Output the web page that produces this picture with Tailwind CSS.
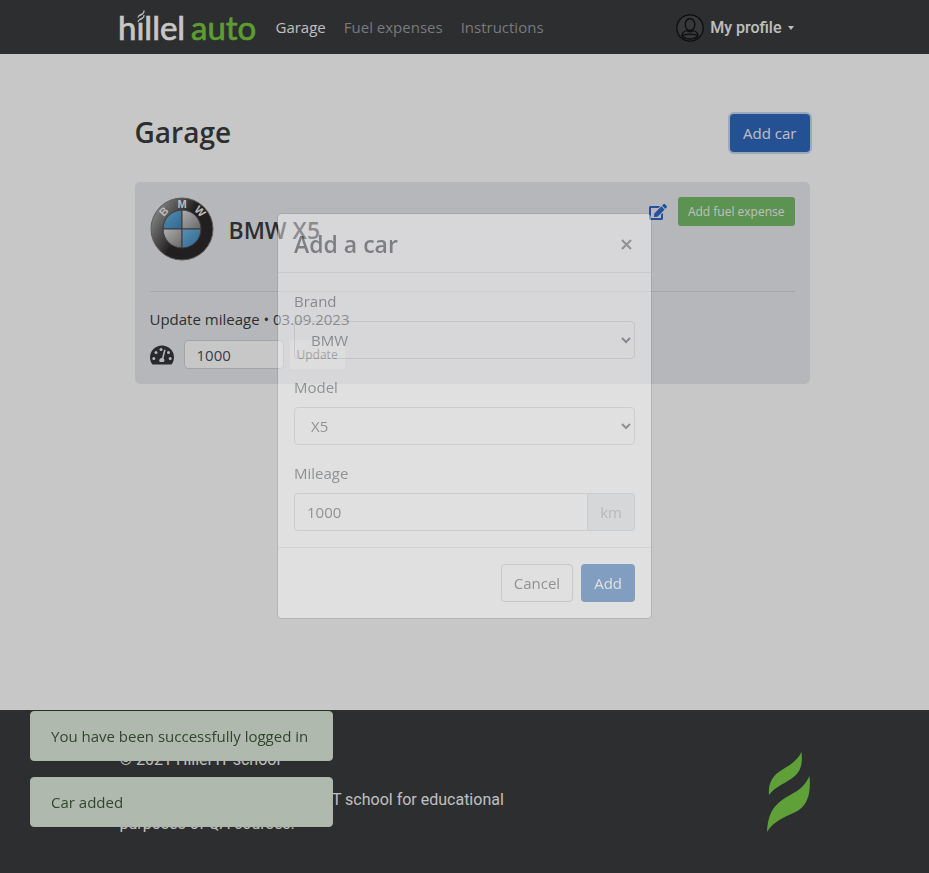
<!DOCTYPE html>
<html lang="en">
<head>
<meta charset="utf-8">
<meta name="viewport" content="width=device-width, initial-scale=1">
<title>Hillel auto - Garage</title>
<script src="https://cdn.jsdelivr.net/npm/@tailwindcss/browser@4"></script>
</head>
<body class="flex min-h-screen flex-col bg-white font-['Open_Sans',sans-serif] text-[15px] leading-6 text-[#3a3c3e]">

<header class="bg-[#393b3e]">
  <div class="mx-auto flex h-[54px] max-w-[720px] items-center px-[15px]">
    <a href="#" aria-label="hillel auto" class="mr-[20px] block">
      <svg width="136" height="48" viewBox="0 0 136 48" class="block overflow-visible font-['Lato',sans-serif] text-[33px]" stroke-width="0.700" aria-hidden="true">
        <text x="-2" y="37" fill="#ffffff" stroke="#ffffff">hıllel</text>
        <text x="71" y="37" fill="#76c93f" stroke="#76c93f">auto</text>
        <path d="M18 14.500 C18 10.500 24 12 24 7.500 C24.500 13 19 11.500 18 14.500Z M18 19 C18 15 24 16 24 12 C24.500 17 19 16 18 19Z" fill="#ffffff" stroke="#ffffff"/>
      </svg>
    </a>
    <nav class="flex gap-[18px] text-[#9b9d9f]">
      <a href="#" class="text-[#f4f4f4]">Garage</a>
      <a href="#">Fuel expenses</a>
      <a href="#">Instructions</a>
    </nav>
    <button type="button" class="mr-[16px] ml-auto flex items-center gap-[6px] pt-[2px] font-['Roboto',sans-serif] text-[16px] text-[#f4f4f4]">
      <svg width="28" height="28" viewBox="0 0 28 28" fill="none" stroke="#111214" stroke-width="1.300" aria-hidden="true">
        <circle cx="14" cy="14" r="13.200" fill="#46484a"/>
        <ellipse cx="14" cy="10.500" rx="4.800" ry="6"/>
        <path d="M10.500 16.500 C7.500 17.500 6 19.500 6 22 C8 24 11 25 14 25 C17 25 20 24 22 22 C22 19.500 20.500 17.500 17.500 16.500 C15.500 18 12.500 18 10.500 16.500Z M6 22 C9 19.500 19 19.500 22 22"/>
      </svg>
      <span class="font-medium">My profile</span>
      <svg width="6" height="4" viewBox="0 0 6 4" fill="#f4f4f4" aria-hidden="true"><path d="M0 0H6L3 4Z"/></svg>
    </button>
  </div>
</header>

<main class="mx-auto w-full max-w-[720px] flex-1 pt-[60px] pr-[15px] pl-[30px]">
  <div class="mb-[30px] flex items-start justify-between">
    <h1 class="text-[28px] leading-9 font-semibold">Garage</h1>
    <button type="button" class="h-[38px] rounded-[4px] bg-[#2d68be] px-[13px] text-[#f4f4f4] ring-2 ring-[#c5d8f0]">Add car</button>
  </div>

  <section class="rounded-[5px] bg-[#e9ebf0] px-[15px] pt-[15px] pb-[15px]">
    <div class="flex items-start border-b border-[#d5d7dc] pb-[30px]">
      <svg width="64" height="64" viewBox="1 1 64 64" class="mr-[15px]" role="img" aria-label="BMW">
        <defs>
          <linearGradient id="ring" x1="0" y1="0.200" x2="0.500" y2="0.500"><stop offset="0" stop-color="#b4b4b6"/><stop offset="1" stop-color="#2c2829"/></linearGradient>
          <linearGradient id="blue" x1="0" y1="0" x2="1" y2="1"><stop offset="0" stop-color="#72b8e2"/><stop offset="1" stop-color="#3d84bb"/></linearGradient>
          <linearGradient id="grey" x1="0" y1="0" x2="1" y2="1"><stop offset="0" stop-color="#e0e0e0"/><stop offset="1" stop-color="#858585"/></linearGradient>
        </defs>
        <circle cx="33" cy="33" r="31" fill="url(#ring)" stroke="#777" stroke-width="1"/>
        <g stroke="#4b4b4b" stroke-width="1">
          <path d="M33 33V14A19 19 0 0 0 14 33Z" fill="url(#blue)"/>
          <path d="M33 33V14A19 19 0 0 1 52 33Z" fill="url(#grey)"/>
          <path d="M33 33V52A19 19 0 0 1 14 33Z" fill="url(#grey)"/>
          <path d="M33 33V52A19 19 0 0 0 52 33Z" fill="url(#blue)"/>
        </g>
        <g fill="#f0f0f0" font-size="11" font-weight="bold" text-anchor="middle" class="font-['Liberation_Sans',sans-serif]">
          <text transform="rotate(-46 33 33)" x="33" y="11.500">B</text>
          <text x="33" y="11.500">M</text>
          <text transform="rotate(46 33 33)" x="33" y="11.500">W</text>
        </g>
      </svg>
      <h2 class="mt-[19px] text-[23px] leading-7 font-semibold">BMW X5</h2>
      <div class="ml-auto flex items-center gap-[11px]">
        <button type="button" aria-label="Edit car" class="block">
          <svg width="18" height="16" viewBox="0 0 576 512" fill="#2d68c8" aria-hidden="true"><path d="M402.600 83.200l90.200 90.200c3.800 3.800 3.800 10 0 13.800L274.400 405.600l-92.800 10.300c-12.400 1.400-22.900-9.100-21.500-21.500l10.300-92.800L388.800 83.200c3.800-3.800 10-3.800 13.800 0zm162-22.900l-48.800-48.800c-15.200-15.200-39.900-15.200-55.200 0l-35.400 35.400c-3.800 3.800-3.800 10 0 13.800l90.200 90.200c3.800 3.800 10 3.800 13.800 0l35.400-35.400c15.200-15.300 15.200-40 0-55.200zM384 346.200V448H64V128h229.800c3.200 0 6.200-1.300 8.500-3.500l40-40c7.600-7.600 2.200-20.500-8.500-20.500H48C21.500 64 0 85.500 0 112v352c0 26.500 21.500 48 48 48h352c26.500 0 48-21.500 48-48V306.200c0-10.700-12.900-16-20.500-8.500l-40 40c-2.200 2.300-3.500 5.300-3.500 8.500z"/></svg>
        </button>
        <button type="button" class="h-[29px] rounded-[3px] bg-[#77bc69] px-[10px] text-[12px] text-[#f4f4f4]">Add fuel expense</button>
      </div>
    </div>
    <form class="pt-[15px]">
      <label for="mileage-update" class="mb-[9px] block">Update mileage • 03.09.2023</label>
      <div class="flex items-center">
        <svg width="24" height="20" viewBox="0 0 24 20" class="mr-[10px]" aria-hidden="true">
          <path d="M2.500 19.500C1 17.500 0 15 0 12.500A12 12 0 0 1 24 12.500C24 15 23 17.500 21.500 19.500Z" fill="#343638"/>
          <g fill="#e9ebf0"><circle cx="3.800" cy="13.500" r="1.500"/><circle cx="6" cy="7.500" r="1.500"/><circle cx="11" cy="4.500" r="1.500"/><circle cx="18.500" cy="7.500" r="1.500"/><circle cx="20.200" cy="13.500" r="1.500"/><path d="M14.200 4.500L15.600 5L13.600 13.200A2.800 2.800 0 0 1 13.800 17H9.700A2.800 2.800 0 0 1 12 12.700Z"/></g>
        </svg>
        <input id="mileage-update" value="1000" class="mr-[6px] h-[29px] w-[100px] rounded-[4px] border border-[#ced4da] bg-white px-[12px] text-[#495057]">
        <button type="button" disabled class="h-[29px] rounded-[3px] bg-[#f7f7f7] px-[7px] text-[12px] text-[#757575]">Update</button>
      </div>
    </form>
  </section>
</main>

<footer class="bg-[#393b3e] font-['Roboto',sans-serif] text-[16px] text-[#f4f4f4]">
  <div class="mx-auto flex max-w-[720px] items-center justify-between px-[15px] pt-[38px] pb-[37px]">
    <div class="max-w-[400px]">
      <p class="mb-[16px]">© 2021 Hillel IT school</p>
      <p>Hillel auto developed in Hillel IT school for educational purposes of QA courses.</p>
    </div>
    <svg width="43" height="80" viewBox="0 0 43 80" fill="#7bcd49" aria-hidden="true">
      <path d="M34.500 0C36 14 33 21 24 27C15 33 8 35 2 43C1 32 5 24 14 18.500C23 13 30 9 34.500 0Z"/>
      <path d="M42.500 24C44 41 41 51 32 58C20 65 8 67 0 80C1 62 6 54 18 46C30 39 37 36 42.500 24Z"/>
    </svg>
  </div>
</footer>

<aside aria-live="polite" class="fixed bottom-[46px] left-[30px] flex w-[303px] flex-col gap-[16px] text-[#3f5a3c]">
  <p class="rounded-[4px] border border-[#dce9d9] bg-[#e1edde] px-[20px] py-[12px] whitespace-nowrap">You have been successfully logged in</p>
  <p class="rounded-[4px] border border-[#dce9d9] bg-[#e1edde] px-[20px] py-[12px]">Car added</p>
</aside>

<div class="fixed inset-0 bg-black/22"></div>

<div class="fixed inset-0 flex items-start justify-center pt-[213px]">
  <form role="dialog" aria-labelledby="dialog-title" class="w-[375px] max-w-full rounded-[5px] border border-black/20 bg-white bg-clip-padding text-[#4c5054] opacity-45">
    <div class="flex items-center justify-between border-b border-[#dee2e6] px-[16px] pt-[16px] pb-[14px]">
      <h2 id="dialog-title" class="text-[23px] leading-7 font-semibold text-[#3a3c3e]">Add a car</h2>
      <button type="button" aria-label="Close" class="p-[3px]"><svg width="11" height="11" viewBox="0 0 11 11" stroke="#666" stroke-width="2.200" aria-hidden="true"><path d="M1 1L10 10M10 1L1 10"/></svg></button>
    </div>
    <div class="flex flex-col gap-[16px] border-b border-[#dee2e6] p-[16px]">
      <div>
        <label for="brand" class="mb-[8px] block">Brand</label>
        <select id="brand" class="block h-[38px] w-full rounded-[4px] border border-[#ced4da] bg-white px-[12px]"><option>BMW</option></select>
      </div>
      <div>
        <label for="model" class="mb-[8px] block">Model</label>
        <select id="model" class="block h-[38px] w-full rounded-[4px] border border-[#ced4da] bg-white px-[12px]"><option>X5</option></select>
      </div>
      <div>
        <label for="mileage" class="mb-[8px] block">Mileage</label>
        <div class="flex h-[38px]">
          <input id="mileage" value="1000" class="min-w-0 flex-1 rounded-l-[4px] border border-[#ced4da] bg-white px-[12px]">
          <span class="flex items-center rounded-r-[4px] border border-l-0 border-[#ced4da] bg-[#e9ecef] px-[12px] text-[#a4a7aa]">km</span>
        </div>
      </div>
    </div>
    <div class="flex justify-end gap-[8px] px-[16px] py-[16px]">
      <button type="button" class="h-[38px] rounded-[4px] border border-[#cacaca] px-[12px]">Cancel</button>
      <button type="submit" class="h-[38px] rounded-[4px] bg-[#2e6dba] px-[13px] text-white">Add</button>
    </div>
  </form>
</div>
</body>
</html>
